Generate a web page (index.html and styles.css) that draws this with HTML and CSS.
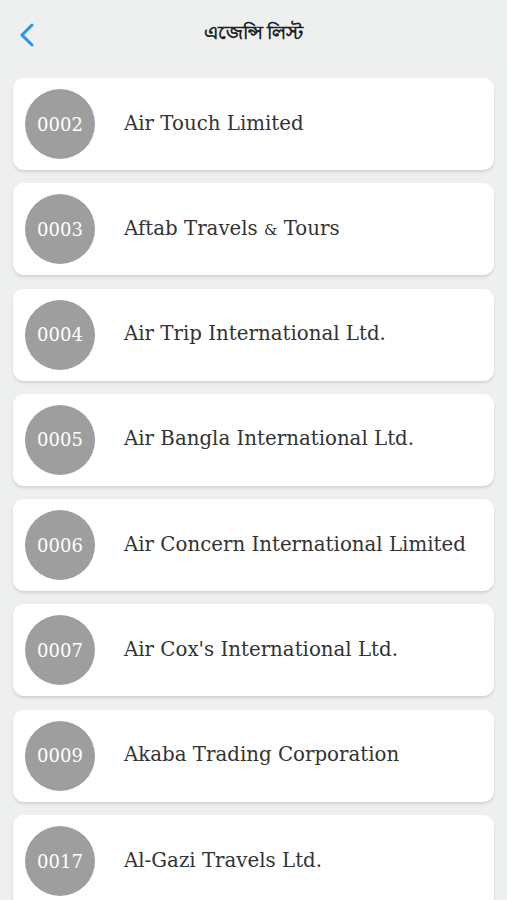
FILE: index.html
```html
<!DOCTYPE html>
<html lang="bn">
<head>
  <meta charset="UTF-8" />
  <meta name="viewport" content="width=device-width, initial-scale=1.0"/>
  <title>এজেন্সি লিস্ট</title>
  <link rel="stylesheet" href="styles.css">
</head>
<body>

  <!-- Header -->
  <div class="top-bar">
    <span class="back">
      <svg width="16" height="24" viewBox="0 0 16 24">
        <path d="M13 2 L3 12 L13 22" fill="none" stroke="#2196f3" stroke-width="3" stroke-linecap="round" stroke-linejoin="round"/>
      </svg>
    </span>
    <div class="title">এজেন্সি লিস্ট</div>
  </div>

  <!-- Agency list -->
  <div class="agency-list">
    <div class="agency-card">
      <div class="code">0002</div>
      <div class="name">Air Touch Limited</div>
    </div>
    <div class="agency-card">
      <div class="code">0003</div>
      <div class="name">Aftab Travels <span class="amp">&amp;</span> Tours</div>
    </div>
    <div class="agency-card">
      <div class="code">0004</div>
      <div class="name">Air Trip International Ltd.</div>
    </div>
    <div class="agency-card">
      <div class="code">0005</div>
      <div class="name">Air Bangla International Ltd.</div>
    </div>
    <div class="agency-card">
      <div class="code">0006</div>
      <div class="name">Air Concern International Limited</div>
    </div>
    <div class="agency-card">
      <div class="code">0007</div>
      <div class="name">Air Cox's International Ltd.</div>
    </div>
    <div class="agency-card">
      <div class="code">0009</div>
      <div class="name">Akaba Trading Corporation</div>
    </div>
    <div class="agency-card">
      <div class="code">0017</div>
      <div class="name">Al-Gazi Travels Ltd.</div>
    </div>
  </div>

</body>
</html>
```

FILE: styles.css
```css
body {
  margin: 0;
  background-color: #eef0f0;
  font-family: "DejaVu Serif", serif;
  color: #333;
  overflow: hidden;
}

/* Header */
.top-bar {
  position: relative;
  height: 68px;
  display: flex;
  align-items: center;
  justify-content: center;
}

.back {
  position: absolute;
  left: 19px;
  top: 23px;
  line-height: 0;
}

.title {
  font-family: "Noto Sans", "DejaVu Sans", sans-serif;
  font-size: 19px;
  font-weight: bold;
  color: #222;
}

/* List */
.agency-list {
  display: flex;
  flex-direction: column;
  gap: 13.3px;
  padding: 10px 13px;
}

.agency-card {
  display: flex;
  align-items: center;
  height: 92px;
  padding-left: 12px;
  background-color: white;
  border-radius: 11px;
  box-shadow: 0 2px 3px rgba(0,0,0,0.12);
  box-sizing: border-box;
}

.code {
  width: 70px;
  height: 70px;
  border-radius: 50%;
  background-color: #9e9e9e;
  color: white;
  font-size: 18px;
  display: flex;
  align-items: center;
  justify-content: center;
  flex-shrink: 0;
}

.name {
  margin-left: 29px;
  margin-top: -2px;
  font-size: 19.8px;
  color: #333;
  white-space: nowrap;
}

.amp {
  font-size: 15px;
}
```
